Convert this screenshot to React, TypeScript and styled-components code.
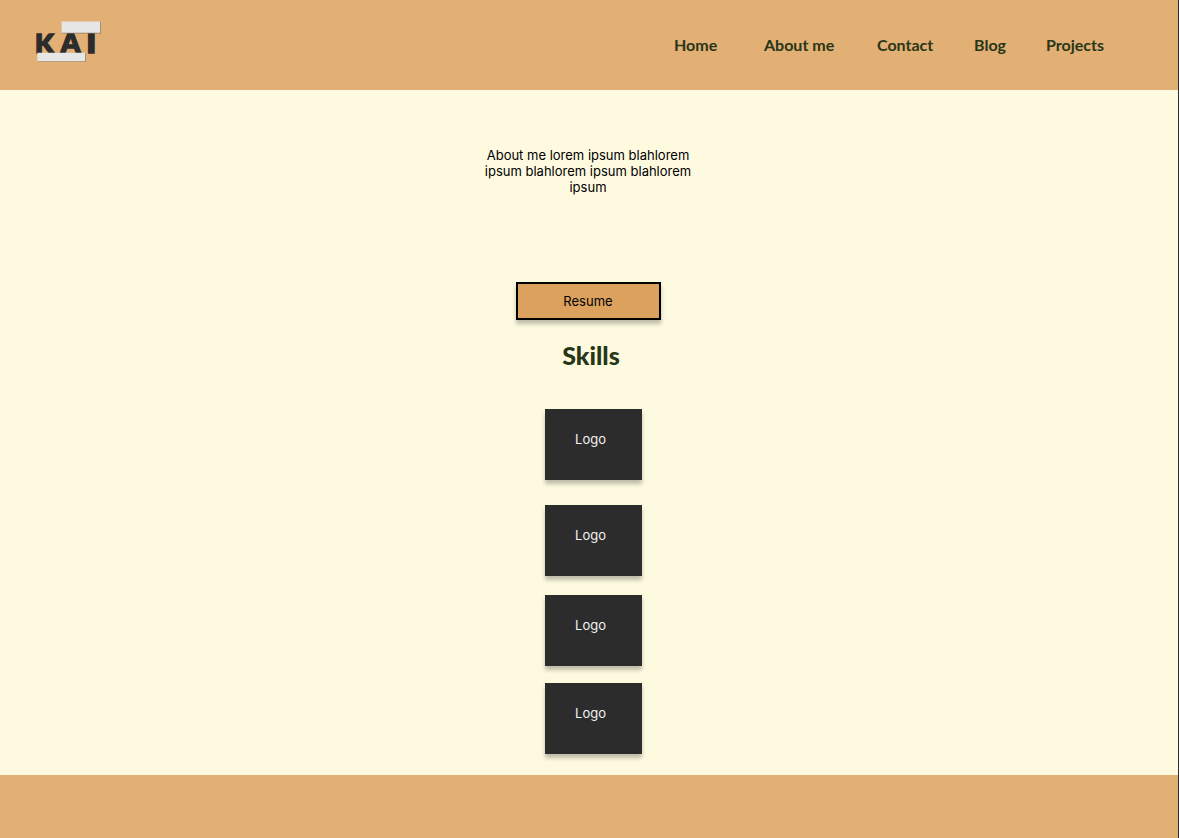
import React from "react";
import styled, { createGlobalStyle } from "styled-components";

const GlobalStyle = createGlobalStyle`
  *, *::before, *::after { box-sizing: border-box; }
  body { margin: 0; background: #fefae0; }
`;

const Page = styled.div`
  display: flex;
  flex-direction: column;
  min-height: 100vh;
  border-right: 1px solid #2c2c2c;
  background: #fefae0;
  color: #000;
  font: 400 13px/16px Inter, sans-serif;
`;

const Header = styled.header`
  display: flex;
  align-items: center;
  justify-content: space-between;
  height: 90px;
  padding: 0 72px 0 32px;
  background: #e2af74;
`;

const HomeLink = styled.a`
  display: block;
  height: 50px;
`;

const NavList = styled.ul`
  display: grid;
  grid-template-columns: 90px 113px 97px 72px 60px;
  margin: 0;
  padding: 0;
  list-style: none;
`;

const NavLink = styled.a`
  color: #283618;
  font: 700 16px/24px Lato, sans-serif;
  text-decoration: none;
  white-space: nowrap;
`;

const Main = styled.main`
  display: flex;
  flex: 1;
  flex-direction: column;
  align-items: center;
  padding: 57px 2px 21px 0;
`;

const Intro = styled.p`
  width: 216px;
  margin: 0;
  text-align: center;
`;

const ResumeButton = styled.button`
  width: 145px;
  height: 38px;
  margin-top: 87px;
  padding: 0;
  border: 2px solid #000;
  background: #dda15e;
  box-shadow: 0 4px 4px rgba(0, 0, 0, 0.25);
  color: #000;
  font: inherit;
`;

const SkillsTitle = styled.h2`
  margin: 20px 0 0;
  padding-left: 6px;
  color: #283618;
  font: 900 25px/30px Lato, sans-serif;
`;

const SkillList = styled.ul`
  margin: 39px 0 0;
  padding: 0 0 0 10px;
  list-style: none;
`;

const SkillTile = styled.li<{ $gap: number }>`
  width: 97px;
  height: 71px;
  margin-bottom: ${({ $gap }) => $gap}px;
  padding: 22px 5px 0 0;
  background: #2c2c2c;
  box-shadow: 0 4px 4px rgba(0, 0, 0, 0.25);
  color: #f2f2f2;
  text-align: center;
`;

const Footer = styled.footer`
  height: 63px;
  background: #e2af74;
`;

const LogoText = styled.text`
  fill: #2c2c2c;
  stroke: #2c2c2c;
  stroke-width: 1.6px;
  font-family: Lato, sans-serif;
  font-weight: 900;
`;

const links = ["Home", "About me", "Contact", "Blog", "Projects"];
const tileGaps = [25, 19, 17, 0];

function Logo() {
  return (
    <svg width="72" height="50" viewBox="0 0 72 50" role="img" aria-label="KAT">
      <clipPath id="plate-edge">
        <path d="M0 3h68v47H0z" />
      </clipPath>
      <LogoText x="3" y="32.5" fontSize="27">K</LogoText>
      <LogoText x="28.8" y="32.5" fontSize="28">A</LogoText>
      <g clipPath="url(#plate-edge)">
        <LogoText x="49" y="32.5" fontSize="34">T</LogoText>
      </g>
      <path fill="#8f7960" d="M30 2h39v11.4H30zM6 33.4h48v8.4H6z" />
      <path fill="#e6e6e6" d="M29.6 1.6h38.6v11.2H29.6zM5.4 32.8h47.8v8.4H5.4z" />
    </svg>
  );
}

export default function App() {
  return (
    <>
      <GlobalStyle />
      <Page>
        <Header>
          <HomeLink href="#home">
            <Logo />
          </HomeLink>
          <nav aria-label="Main">
            <NavList>
              {links.map((label) => (
                <li key={label}>
                  <NavLink href={`#${label.toLowerCase().replace(" ", "-")}`}>{label}</NavLink>
                </li>
              ))}
            </NavList>
          </nav>
        </Header>
        <Main>
          <Intro>About me lorem ipsum blahlorem ipsum blahlorem ipsum blahlorem ipsum</Intro>
          <ResumeButton type="button">Resume</ResumeButton>
          <SkillsTitle>Skills</SkillsTitle>
          <SkillList>
            {tileGaps.map((gap, index) => (
              <SkillTile key={index} $gap={gap}>Logo</SkillTile>
            ))}
          </SkillList>
        </Main>
        <Footer />
      </Page>
    </>
  );
}
